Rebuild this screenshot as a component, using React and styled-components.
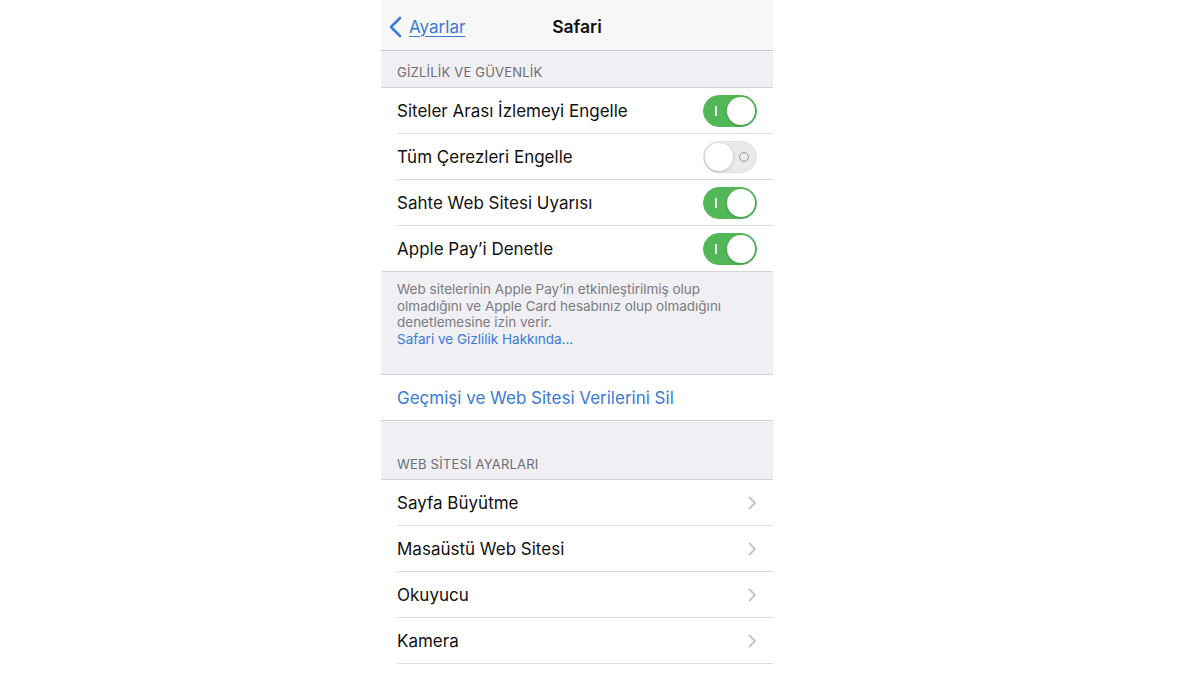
import React from 'react';
import styled, { createGlobalStyle } from 'styled-components';

const GlobalStyle = createGlobalStyle`
  html, body {
    margin: 0;
    padding: 0;
    background: #fff;
  }
  body {
    font-family: Inter, "Noto Sans", "Liberation Sans", sans-serif;
    -webkit-font-smoothing: antialiased;
  }
`;

const Page = styled.div`
  width: 1200px;
  height: 675px;
  padding-left: 381px;
  box-sizing: border-box;
  overflow: hidden;
  background: #fff;
`;

const Phone = styled.div`
  width: 392px;
  height: 675px;
  display: flex;
  flex-direction: column;
  background: #efeff4;

  & > * {
    flex-shrink: 0;
  }
`;

const NavBar = styled.div`
  height: 51px;
  box-sizing: border-box;
  padding-top: 3px;
  display: flex;
  align-items: center;
  position: relative;
  background: #f7f7f7;
  border-bottom: 1px solid #c9c9cc;
`;

const Back = styled.a`
  display: flex;
  align-items: center;
  gap: 7px;
  padding-left: 8px;
  color: #3a7bd5;
  font-size: 17px;
  text-decoration: underline;
  text-underline-offset: 3px;
  text-decoration-thickness: 1px;
  cursor: pointer;
`;

const Title = styled.div`
  position: absolute;
  left: 0;
  right: 0;
  text-align: center;
  font-size: 17.5px;
  font-weight: 600;
  color: #111;
  pointer-events: none;
`;

const SectionHeader = styled.div`
  height: ${p => p.$h}px;
  display: flex;
  align-items: flex-end;
  padding: 0 16px 7px;
  box-sizing: border-box;
  font-size: 13px;
  color: #6d6d72;
  letter-spacing: 0.2px;
  border-bottom: 1px solid #d4d4d7;
`;

const Group = styled.div`
  background: #fff;
  flex-grow: ${p => (p.$open ? 1 : 0)};
  border-bottom: ${p => (p.$open ? 'none' : '1px solid #d4d4d7')};
`;

const Row = styled.div`
  height: 45px;
  display: flex;
  align-items: center;
  justify-content: space-between;
  margin-left: 16px;
  padding-right: 16px;
  border-bottom: ${p => (p.$last ? 'none' : '1px solid #dcdcdf')};
  font-size: 17px;
  color: ${p => (p.$action ? '#3a7bd5' : '#111')};
`;

const Footer = styled.div`
  padding: 9px 16px 27px;
  font-size: 13.5px;
  line-height: 16.5px;
  color: #7b7b80;
  border-bottom: 1px solid #d4d4d7;
`;

const FooterLink = styled.div`
  color: #3a7bd5;
`;

const Track = styled.div`
  width: 54px;
  height: 32px;
  border-radius: 16px;
  box-sizing: border-box;
  position: relative;
  background: ${p => (p.$on ? '#52b857' : '#e9e9ea')};
  border: 1px solid ${p => (p.$on ? '#52b857' : '#e2e2e4')};
`;

const Knob = styled.div`
  position: absolute;
  top: 1px;
  left: ${p => (p.$on ? '23px' : '1px')};
  width: 28px;
  height: 28px;
  border-radius: 50%;
  background: #fff;
  box-shadow: 0 1px 3px rgba(0, 0, 0, 0.22);
`;

const OnMark = styled.div`
  position: absolute;
  left: 11px;
  top: 10px;
  width: 1.5px;
  height: 10px;
  background: rgba(255, 255, 255, 0.85);
`;

const OffMark = styled.div`
  position: absolute;
  right: 7px;
  top: 10px;
  width: 8px;
  height: 8px;
  border-radius: 50%;
  border: 1.3px solid #9a9a9e;
`;

const Toggle = ({ on }) => (
  <Track $on={on}>
    {on ? <OnMark /> : <OffMark />}
    <Knob $on={on} />
  </Track>
);

const Chevron = () => (
  <svg width="9" height="14" viewBox="0 0 9 14" fill="none">
    <path d="M1.5 1.5 L7 7 L1.5 12.5" stroke="#c4c4c7" strokeWidth="1.8" strokeLinecap="round" strokeLinejoin="round" />
  </svg>
);

const BackChevron = () => (
  <svg width="13" height="22" viewBox="0 0 13 22" fill="none">
    <path d="M11 2 L2 11 L11 20" stroke="#3a7bd5" strokeWidth="2.6" strokeLinecap="round" strokeLinejoin="round" />
  </svg>
);

const privacy = [
  { label: 'Siteler Arası İzlemeyi Engelle', on: true },
  { label: 'Tüm Çerezleri Engelle', on: false },
  { label: 'Sahte Web Sitesi Uyarısı', on: true },
  { label: 'Apple Pay\u2019i Denetle', on: true },
];

const siteSettings = ['Sayfa Büyütme', 'Masaüstü Web Sitesi', 'Okuyucu', 'Kamera'];

export default function App() {
  return (
    <Page>
      <GlobalStyle />
      <Phone>
        <NavBar>
          <Back>
            <BackChevron />
            Ayarlar
          </Back>
          <Title>Safari</Title>
        </NavBar>

        <SectionHeader $h={37}>GİZLİLİK VE GÜVENLİK</SectionHeader>
        <Group>
          {privacy.map((item, i) => (
            <Row key={item.label} $last={i === privacy.length - 1}>
              {item.label}
              <Toggle on={item.on} />
            </Row>
          ))}
        </Group>
        <Footer>
          Web sitelerinin Apple Pay’in etkinleştirilmiş olup olmadığını ve Apple Card hesabınız olup olmadığını
          denetlemesine izin verir.
          <FooterLink>Safari ve Gizlilik Hakkında...</FooterLink>
        </Footer>

        <Group>
          <Row $last $action>Geçmişi ve Web Sitesi Verilerini Sil</Row>
        </Group>

        <SectionHeader $h={59}>WEB SİTESİ AYARLARI</SectionHeader>
        <Group $open>
          {siteSettings.map(label => (
            <Row key={label}>
              {label}
              <Chevron />
            </Row>
          ))}
        </Group>
      </Phone>
    </Page>
  );
}
